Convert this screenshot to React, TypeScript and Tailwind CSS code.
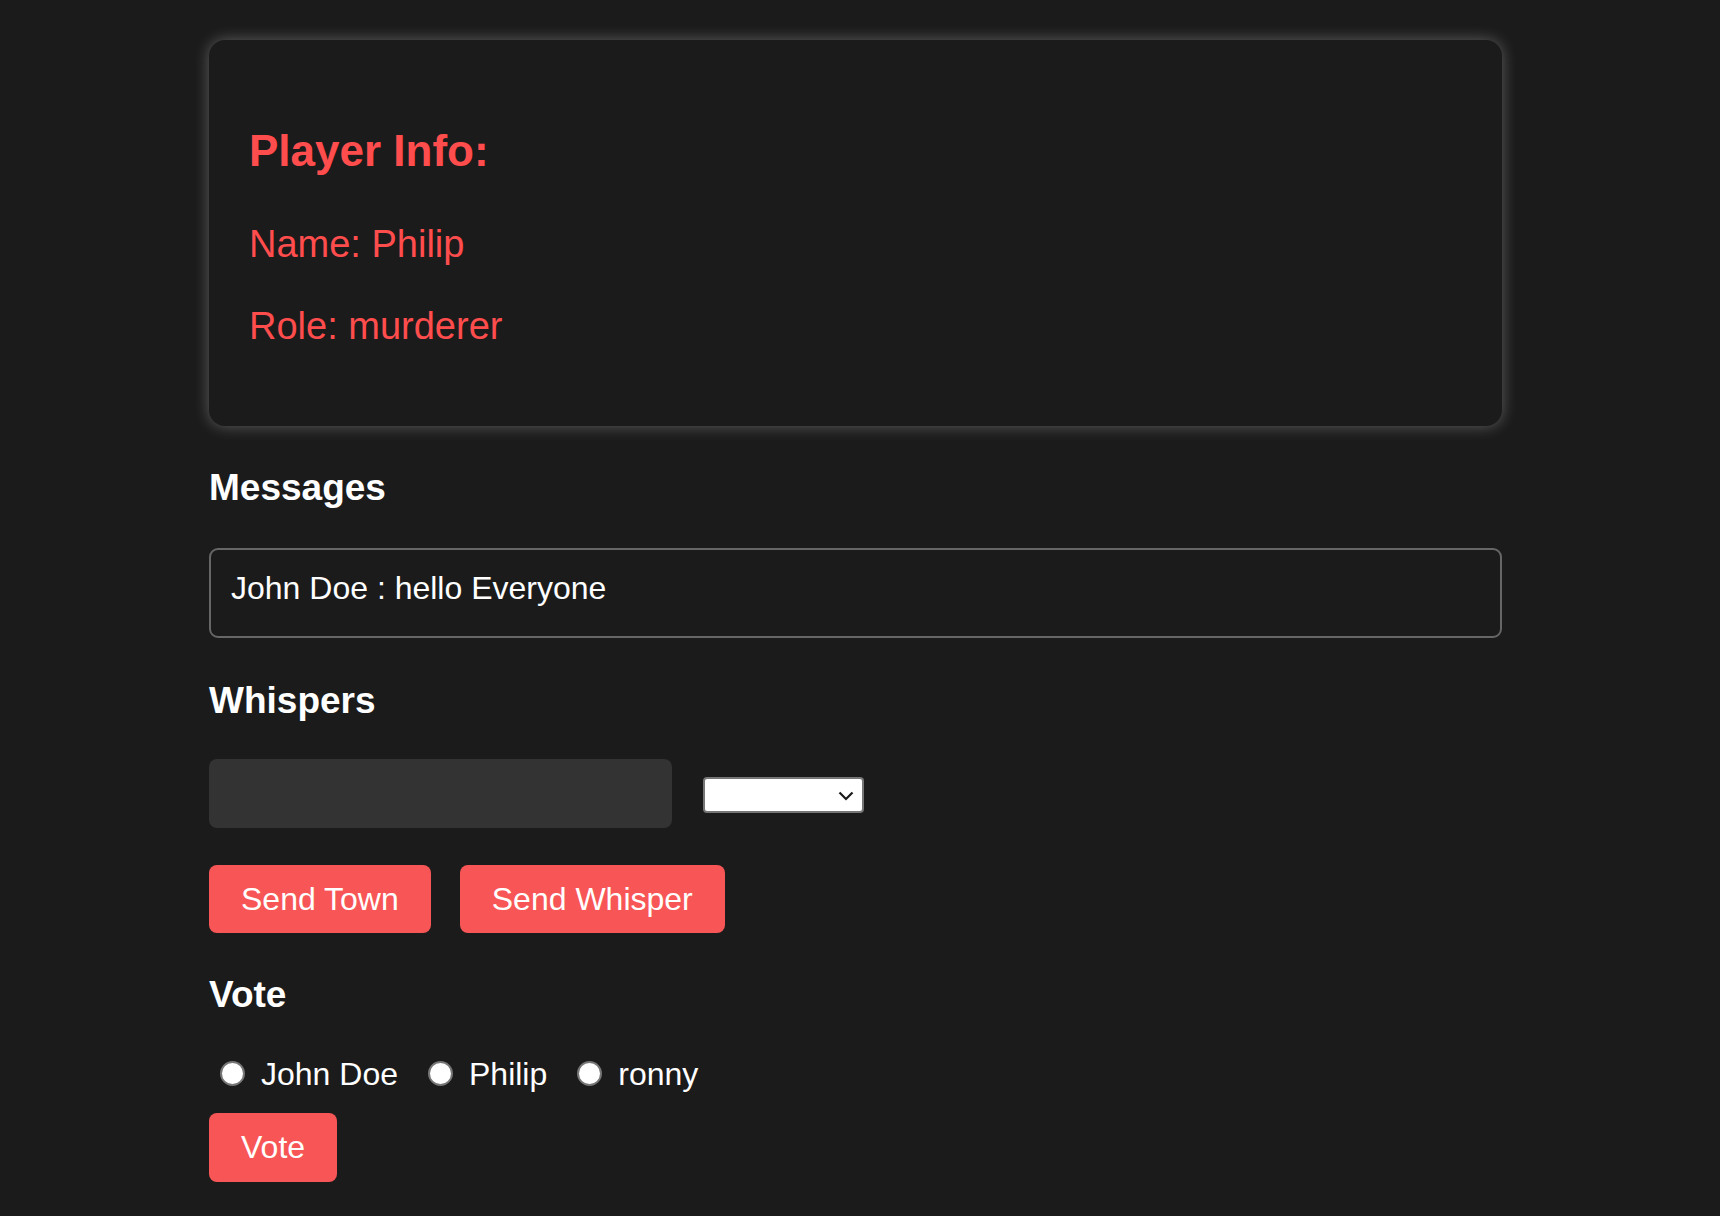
import React, { useState } from "react";

const players = ["John Doe", "Philip", "ronny"];

export default function App() {
  const [whisper, setWhisper] = useState("");
  const [target, setTarget] = useState("");
  const [vote, setVote] = useState("");

  return (
    <div className="min-h-screen bg-[#1b1b1b] font-['Liberation_Sans',Arial,sans-serif] text-white">
      <div className="ml-[209px] w-[1293px] pt-10 pb-[35px]">
        {/* player card */}
        <div className="rounded-[16px] bg-[#1b1b1b] px-10 py-10 text-[#ff4d4d] shadow-[0_0_15px_rgba(255,255,255,0.3)]">
          <h2 className="mt-[45px] text-[44px] font-bold leading-[51px]">Player Info:</h2>
          <p className="mt-[46px] text-[38px] leading-[44px]">Name: Philip</p>
          <p className="mt-[38px] mb-[38px] text-[38px] leading-[44px]">Role: murderer</p>
        </div>

        <h3 className="mt-10 text-[37px] font-bold leading-[43px]">Messages</h3>
        <div className="mt-[39px] h-[90px] rounded-[9px] border-2 border-[#666666] pl-5 pt-5">
          <p className="text-[32px] leading-[37px]">John Doe : hello Everyone</p>
        </div>

        <h3 className="mt-[41px] text-[37px] font-bold leading-[43px]">Whispers</h3>
        <div className="mt-[37px] flex items-start gap-[31px]">
          <input
            value={whisper}
            onChange={(e) => setWhisper(e.target.value)}
            className="h-[69px] w-[463px] rounded-[8px] bg-[#333333] px-4 text-[32px] text-white outline-none"
          />
          <div className="relative mt-[18px]">
            <select
              value={target}
              onChange={(e) => setTarget(e.target.value)}
              className="h-[36px] w-[161px] appearance-none rounded-[4px] border-2 border-[#767676] bg-white text-[16px] text-black outline-none"
            >
              <option value=""></option>
              {players.map((p) => (
                <option key={p} value={p}>
                  {p}
                </option>
              ))}
            </select>
            <svg
              className="pointer-events-none absolute right-[10px] top-[14px]"
              width="16"
              height="10"
              viewBox="0 0 16 10"
              fill="none"
            >
              <path d="M1.5 1.5 L8 8 L14.5 1.5" stroke="#1a1a1a" strokeWidth="2.2" />
            </svg>
          </div>
        </div>

        <div className="mt-[37px] flex gap-[29px]">
          <button className="rounded-[8px] bg-[#f85656] px-8 py-4 text-[32px] leading-[36px] text-white">
            Send Town
          </button>
          <button className="rounded-[8px] bg-[#f85656] px-8 py-4 text-[32px] leading-[36px] text-white">
            Send Whisper
          </button>
        </div>

        <h3 className="mt-10 text-[37px] font-bold leading-[43px]">Vote</h3>
        <div className="mt-10 flex items-center gap-[30px] pl-[11px]">
          {players.map((p) => (
            <label key={p} className="flex items-center gap-4 text-[32px] leading-[37px]">
              <input
                type="radio"
                name="vote"
                checked={vote === p}
                onChange={() => setVote(p)}
                className="mb-[3px] h-[25px] w-[25px] appearance-none rounded-full border-2 border-[#767676] bg-white checked:border-[7px] checked:border-[#f85656]"
              />
              {p}
            </label>
          ))}
        </div>
        <button className="mt-5 rounded-[8px] bg-[#f85656] px-8 py-4 text-[32px] leading-[37px] text-white">
          Vote
        </button>
      </div>
    </div>
  );
}
